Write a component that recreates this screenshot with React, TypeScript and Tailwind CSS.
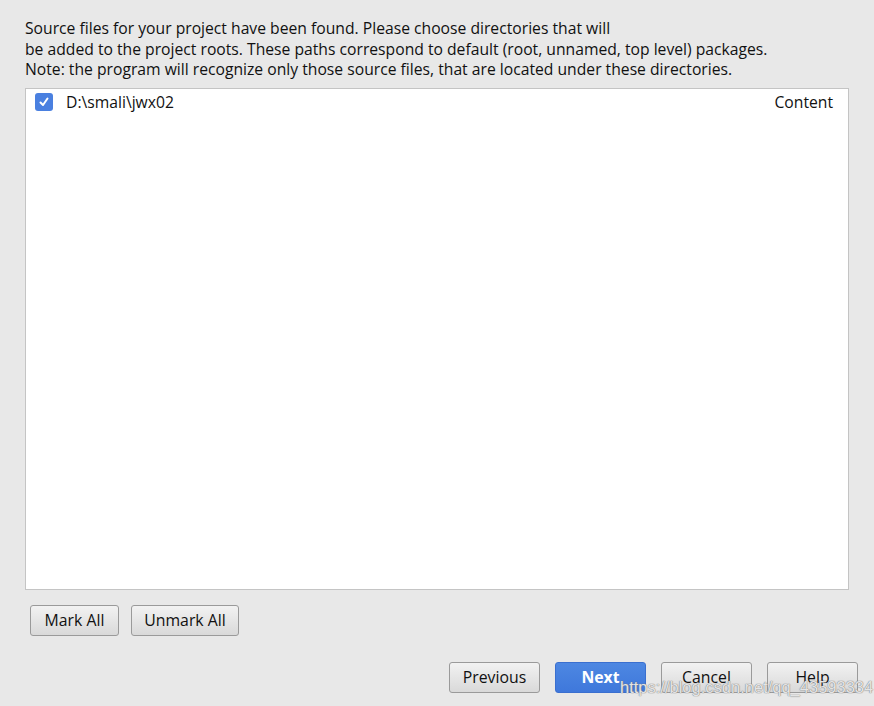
import React from 'react'

const font = { fontFamily: '"Open Sans", "Noto Sans", Arial, sans-serif' }

function Btn({ label, primary, w }: { label: string; primary?: boolean; w: string }) {
  return (
    <button
      type="button"
      className={
        primary
          ? `h-[31px] ${w} pt-[2px] rounded-[3px] border border-[#3a6fcf] bg-gradient-to-b from-[#4d87e2] to-[#3f78db] text-white font-bold text-[15.8px]`
          : `h-[31px] ${w} pt-[2px] rounded-[3px] border border-[#9a9a9a] bg-gradient-to-b from-[#f2f2f2] to-[#d9d9d9] text-[#111] text-[15.8px]`
      }
    >
      {label}
    </button>
  )
}

export default function App() {
  return (
    <div className="w-[874px] h-[706px] bg-[#e8e8e8] flex flex-col relative overflow-hidden" style={font}>
      <div className="pl-[25px] pt-[18px] text-[15.7px] leading-[20.5px] text-[#111]">
        <p>Source files for your project have been found. Please choose directories that will</p>
        <p>be added to the project roots. These paths correspond to default (root, unnamed, top level) packages.</p>
        <p>Note: the program will recognize only those source files, that are located under these directories.</p>
      </div>

      <div className="ml-[25px] mt-[8px] w-[824px] h-[502px] bg-white border border-[#c4c4c4]">
        <div className="flex items-center h-[24px] pl-[9px] pr-[15px] mt-[1px]">
          <span className="w-[18px] h-[18px] rounded-[3px] bg-[#4a80e0] flex items-center justify-center">
            <svg width="12" height="12" viewBox="0 0 12 12">
              <path d="M2.5 6.5 L5 9 L9.5 2.5" stroke="white" strokeWidth="2" fill="none" strokeLinecap="round" strokeLinejoin="round" />
            </svg>
          </span>
          <span className="ml-[13px] pt-[2px] text-[15.7px] text-[#111]">D:\smali\jwx02</span>
          <span className="ml-auto pt-[2px] text-[15.7px] text-[#111]">Content</span>
        </div>
      </div>

      <div className="flex gap-[12px] pl-[30px] mt-[15px]">
        <Btn label="Mark All" w="w-[89px]" />
        <Btn label="Unmark All" w="w-[108px]" />
      </div>

      <div className="flex justify-end gap-[15px] pr-[16px] mt-[26px]">
        <Btn label="Previous" w="w-[91px]" />
        <Btn label="Next" primary w="w-[91px]" />
        <Btn label="Cancel" w="w-[91px]" />
        <Btn label="Help" w="w-[91px]" />
      </div>

      <span
        className="absolute left-[620px] top-[675px] text-[16.5px] text-white/80"
        style={{ fontFamily: '"Liberation Sans", Arial, sans-serif', textShadow: '0 0 1px #777, 0 0 1px #777' }}
      >
        https://blog.csdn.net/qq_43593334
      </span>
    </div>
  )
}
